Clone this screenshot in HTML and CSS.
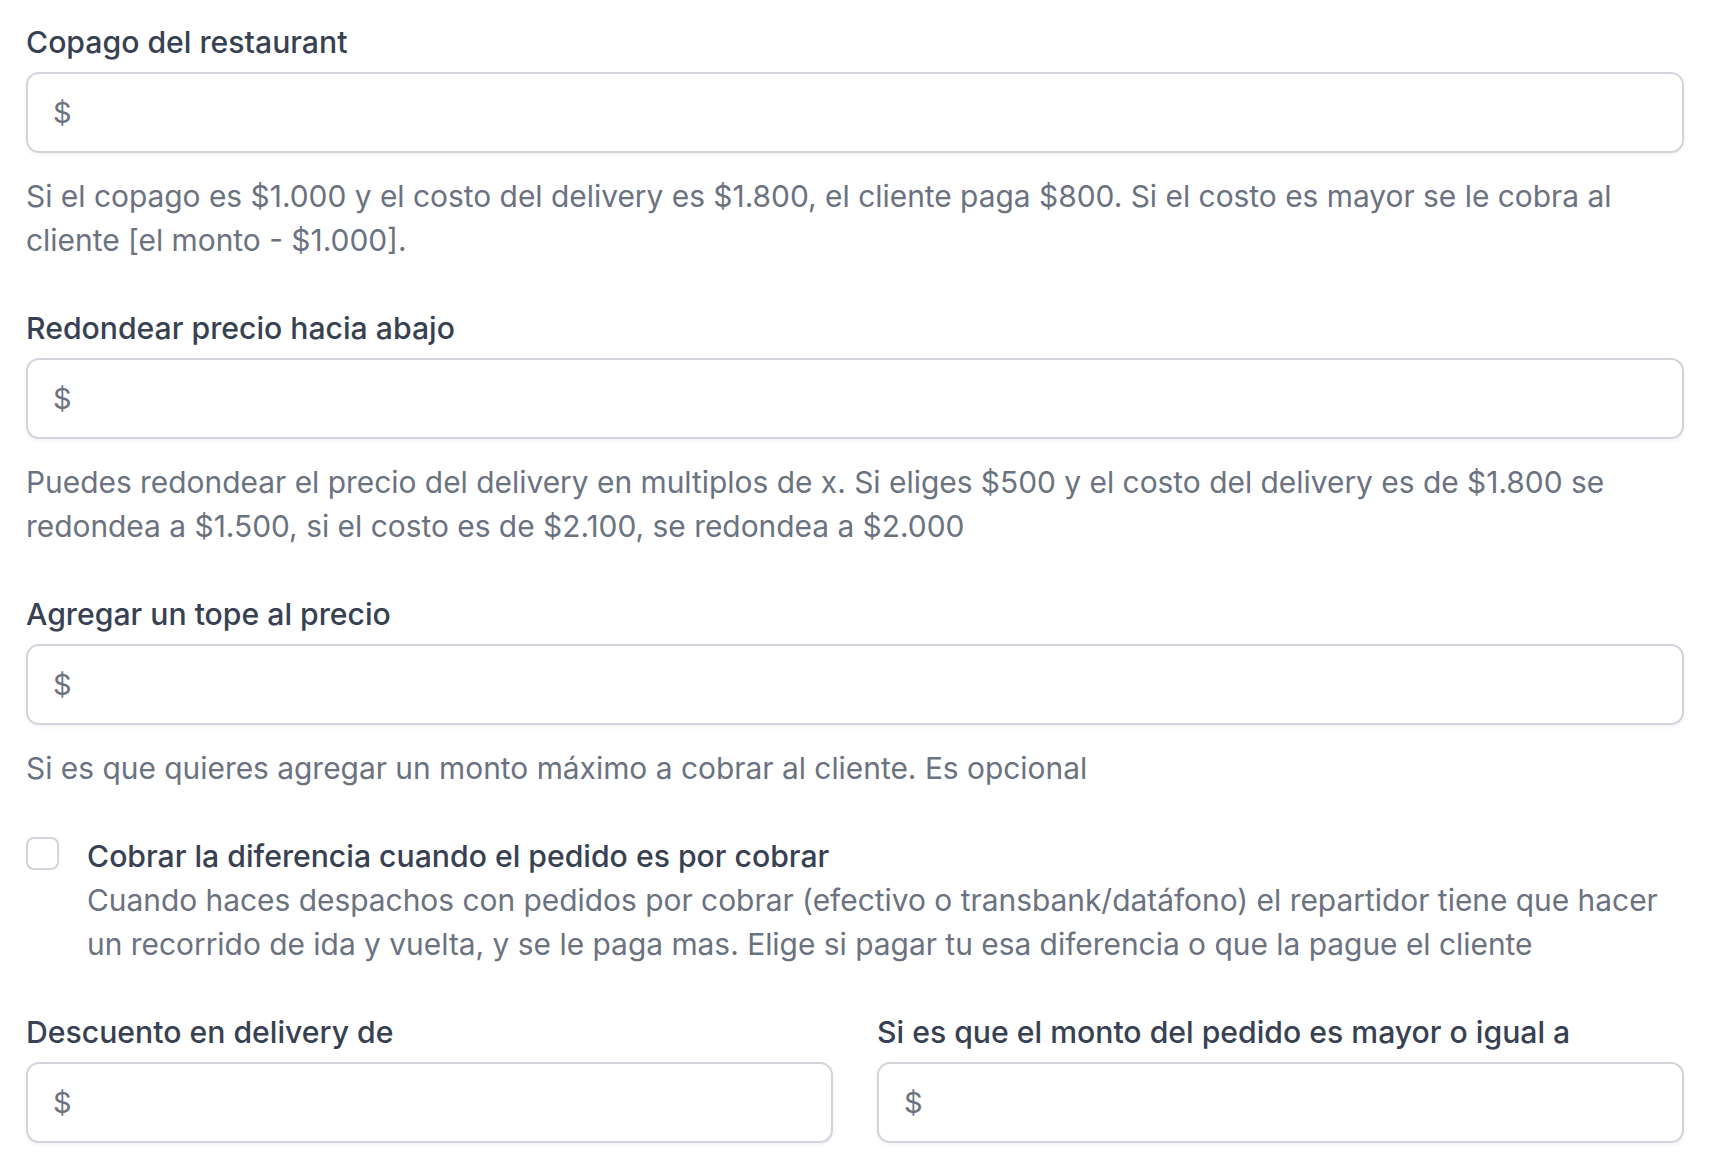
FILE: index.html
```html
<!DOCTYPE html>
<html lang="es">
<head>
  <meta charset="UTF-8" />
  <meta name="viewport" content="width=device-width, initial-scale=1.0"/>
  <title>Configuración de delivery</title>
  <link rel="stylesheet" href="styles.css">
</head>
<body>

  <form class="form">

    <div class="group">
      <label class="label" for="copago">Copago del restaurant</label>
      <div class="money">
        <span class="money-sign">$</span>
        <input class="money-input" id="copago" type="text">
      </div>
      <p class="help">Si el copago es $1.000 y el costo del delivery es $1.800, el cliente paga $800. Si el costo es mayor se le cobra al cliente [el monto - $1.000].</p>
    </div>

    <div class="group">
      <label class="label" for="redondeo">Redondear precio hacia abajo</label>
      <div class="money">
        <span class="money-sign">$</span>
        <input class="money-input" id="redondeo" type="text">
      </div>
      <p class="help">Puedes redondear el precio del delivery en multiplos de x. Si eliges $500 y el costo del delivery es de $1.800 se redondea a $1.500, si el costo es de $2.100, se redondea a $2.000</p>
    </div>

    <div class="group">
      <label class="label" for="tope">Agregar un tope al precio</label>
      <div class="money">
        <span class="money-sign">$</span>
        <input class="money-input" id="tope" type="text">
      </div>
      <p class="help">Si es que quieres agregar un monto máximo a cobrar al cliente. Es opcional</p>
    </div>

    <div class="group check-row">
      <div class="check-box-wrap">
        <input class="check" id="diferencia" type="checkbox">
      </div>
      <div class="check-text">
        <label class="label" for="diferencia">Cobrar la diferencia cuando el pedido es por cobrar</label>
        <p class="help tight">Cuando haces despachos con pedidos por cobrar (efectivo o transbank/datáfono) el repartidor tiene que hacer un recorrido de ida y vuelta, y se le paga mas. Elige si pagar tu esa diferencia o que la pague el cliente</p>
      </div>
    </div>

    <div class="group two-cols">
      <div>
        <label class="label" for="descuento">Descuento en delivery de</label>
        <div class="money">
          <span class="money-sign">$</span>
          <input class="money-input" id="descuento" type="text">
        </div>
      </div>
      <div>
        <label class="label" for="minimo">Si es que el monto del pedido es mayor o igual a</label>
        <div class="money">
          <span class="money-sign">$</span>
          <input class="money-input" id="minimo" type="text">
        </div>
      </div>
    </div>

  </form>

</body>
</html>
```

FILE: styles.css
```css
body {
  font-family: Inter, "Noto Sans", sans-serif;
  background: #fff;
  margin: 0;
  padding: 20px 26px;
}

.form {
  display: flex;
  flex-direction: column;
  gap: 44px;
}

.label {
  display: block;
  font-size: 30.2px;
  line-height: 44px;
  font-weight: 500;
  color: #374151;
}

.money {
  display: flex;
  align-items: center;
  height: 81px;
  box-sizing: border-box;
  margin-top: 8px;
  border: 2px solid #d1d5db;
  border-radius: 13px;
  box-shadow: 0 2px 4px rgba(0,0,0,0.05);
  background: white;
}

.money-sign {
  padding-left: 25px;
  font-size: 29px;
  color: #6b7280;
}

.money-input {
  flex: 1;
  height: 100%;
  border: none;
  outline: none;
  background: transparent;
  font: inherit;
  font-size: 29px;
  padding: 0 12px;
}

.help {
  margin: 21px 0 0;
  font-size: 29.9px;
  line-height: 44px;
  color: #6b7280;
}

.help.tight {
  margin-top: 0;
}

.check-row {
  display: flex;
  gap: 28px;
}

.check-box-wrap {
  padding-top: 3px;
}

.check {
  display: block;
  appearance: none;
  margin: 0;
  width: 33px;
  height: 33px;
  border: 2px solid #d1d5db;
  border-radius: 8px;
  background: white;
}

.two-cols {
  display: grid;
  grid-template-columns: 1fr 1fr;
  gap: 44px;
}
```
